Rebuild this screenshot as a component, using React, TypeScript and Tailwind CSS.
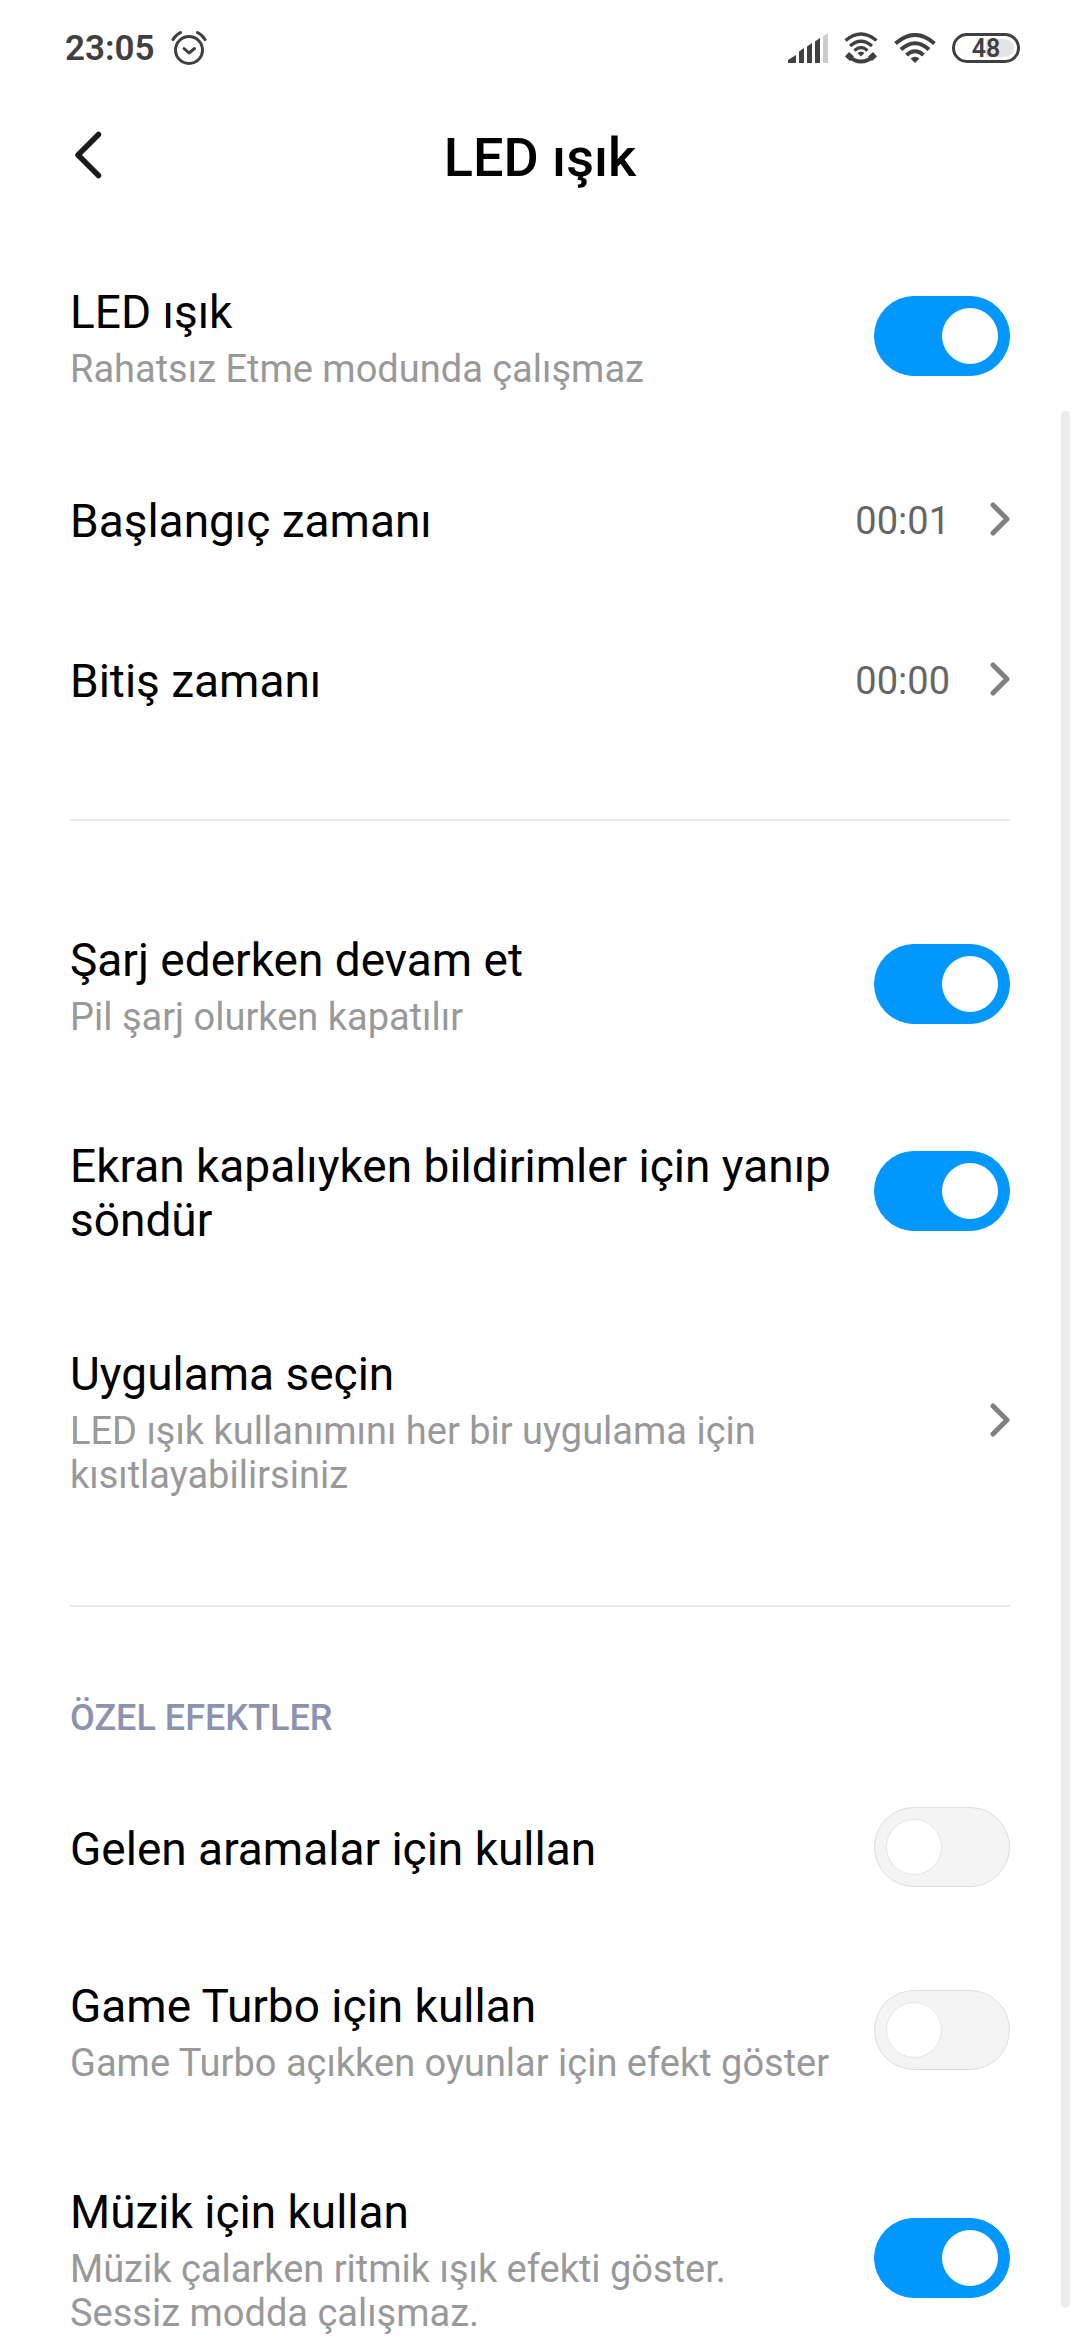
import { useState } from "react";

type RowProps = {
  title: string;
  subtitle?: string;
};

function StatusBar() {
  return (
    <div className="flex h-24 shrink-0 items-center justify-between pl-[65px] pr-[60px] text-[#404040]">
      <div className="flex items-center gap-4">
        <span className="pt-0.5 text-[35px] leading-10 font-semibold">23:05</span>
        <svg className="h-9 w-9" viewBox="0 0 36 36" fill="none" stroke="currentColor" strokeWidth="3" strokeLinecap="round">
          <circle cx="18" cy="20" r="13.5" />
          <path d="M13 18.500l5 4.500 5.500-4.500" strokeLinejoin="round" />
          <path d="M2 9.500Q4.500 5 9.500 2.500M34 9.500Q31.500 5 26.500 2.500" />
        </svg>
      </div>
      <div className="flex items-center gap-4">
        <svg className="h-[30px] w-10" viewBox="0 0 40 30" fill="currentColor">
          <path d="M0 30v-3l8-5V30zM11 30V18.500l5-3.500v15zM19 30V13.500l5-3.500v20zM27 30V8.500L32 5v25z" />
          <path d="M35 30V3.500L40 0v30z" fill="#cccccc" />
        </svg>
        <svg className="h-8 w-[34px]" viewBox="0 0 34 32" fill="none" stroke="currentColor" strokeWidth="3.200">
          <path d="M1.500 8.500Q17-4.500 32.500 8.500M6 14Q17 4.500 28 14M10.500 18.500Q17 12.500 23.500 18.500" />
          <path d="M17 24.500l-3.500-3.500q3.500-2.500 7 0z" fill="currentColor" stroke="none" />
          <path d="M4 24Q17 35 30 24" strokeWidth="4" />
          <path d="M1 24.500l4-4.500 5 4.500-4 4.500zM33 24.500L29 20l-5 4.500 4 4.500z" fill="currentColor" stroke="none" />
        </svg>
        <svg className="h-[30px] w-[42px]" viewBox="0 0 42 30" fill="none" stroke="currentColor" strokeWidth="4">
          <path d="M1.500 10.500Q21-6.500 40.500 10.500M7 16.500Q21 4 35 16.500M12.500 22Q21 14.500 29.500 22" />
          <path d="M21 30l-4.500-4.500q4.500-3.500 9 0z" fill="currentColor" stroke="none" />
        </svg>
        <div className="flex h-[30px] w-[68px] rounded-full border-3 border-[#404040] p-[3px]">
          <span className="flex flex-1 items-center justify-center rounded-full bg-[linear-gradient(to_right,transparent_50%,#e5e5e5_50%)] text-[25px] leading-none font-semibold">
            48
          </span>
        </div>
      </div>
    </div>
  );
}

function Header({ title }: { title: string }) {
  return (
    <header className="grid h-31 shrink-0 grid-cols-[1fr_auto_1fr] items-center px-[70px]">
      <button type="button" aria-label="Geri" className="justify-self-start p-1 pb-2.5">
        <svg className="h-12 w-7" viewBox="0 0 28 48" fill="none" stroke="#1a1a1a" strokeWidth="5.500" strokeLinecap="round" strokeLinejoin="round">
          <path d="M24.500 3.500L4 24l20.500 20.500" />
        </svg>
      </button>
      <h1 className="text-[54px] leading-[64px] font-medium text-black">{title}</h1>
    </header>
  );
}

function RowText({ title, subtitle }: RowProps) {
  return (
    <span className="min-w-0 flex-1 pt-1">
      <span className="block text-[46px] leading-[54px] text-black">{title}</span>
      {subtitle && (
        <span className="mt-2 block whitespace-pre-line text-[38px] leading-[44px] text-[#999999]">{subtitle}</span>
      )}
    </span>
  );
}

function SwitchRow({ title, subtitle, defaultOn = false }: RowProps & { defaultOn?: boolean }) {
  const [on, setOn] = useState(defaultOn);

  return (
    <label className="flex min-h-40 items-center gap-8 py-12">
      <RowText title={title} subtitle={subtitle} />
      <input
        type="checkbox"
        role="switch"
        checked={on}
        onChange={() => setOn(!on)}
        className="-my-4 flex h-20 w-[136px] shrink-0 appearance-none items-center rounded-full border border-[#dedede] bg-[#f4f4f4] px-[11px] before:block before:size-14 before:rounded-full before:border before:border-[#e5e5e5] before:bg-white before:content-[''] checked:justify-end checked:border-[#0097ff] checked:bg-[#0097ff] checked:before:border-white"
      />
    </label>
  );
}

function LinkRow({ title, subtitle, value }: RowProps & { value?: string }) {
  return (
    <button type="button" className="flex min-h-40 w-full items-center py-12 text-left">
      <RowText title={title} subtitle={subtitle} />
      {value && <span className="pt-1 text-[38px] leading-[44px] text-[#666666]">{value}</span>}
      <svg className="ml-10 h-[34px] w-5 shrink-0" viewBox="0 0 20 34" fill="none" stroke="#808080" strokeWidth="5" strokeLinecap="round" strokeLinejoin="round">
        <path d="M3 3l14 14L3 31" />
      </svg>
    </button>
  );
}

function Divider() {
  return <hr className="my-15 h-0.5 border-0 bg-[#e8e8e8]" />;
}

export default function App() {
  return (
    <div className="relative flex h-screen w-full flex-col bg-white font-[Roboto,sans-serif]">
      <StatusBar />
      <Header title="LED ışık" />
      <main className="min-h-0 flex-1 overflow-y-auto px-[70px] pt-[13px] [scrollbar-width:none]">
        <section>
          <SwitchRow title="LED ışık" subtitle="Rahatsız Etme modunda çalışmaz" defaultOn />
          <LinkRow title="Başlangıç zamanı" value="00:01" />
          <LinkRow title="Bitiş zamanı" value="00:00" />
        </section>
        <Divider />
        <section>
          <SwitchRow title="Şarj ederken devam et" subtitle="Pil şarj olurken kapatılır" defaultOn />
          <SwitchRow title="Ekran kapalıyken bildirimler için yanıp söndür" defaultOn />
          <LinkRow title="Uygulama seçin" subtitle="LED ışık kullanımını her bir uygulama için kısıtlayabilirsiniz" />
        </section>
        <Divider />
        <section>
          <h2 className="pt-[30px] pb-7 text-[36px] leading-[42px] font-medium text-[#8c93b0]">ÖZEL EFEKTLER</h2>
          <SwitchRow title="Gelen aramalar için kullan" />
          <SwitchRow title="Game Turbo için kullan" subtitle="Game Turbo açıkken oyunlar için efekt göster" />
          <SwitchRow
            title="Müzik için kullan"
            subtitle={"Müzik çalarken ritmik ışık efekti göster.\nSessiz modda çalışmaz."}
            defaultOn
          />
        </section>
      </main>
      {/* scroll thumb */}
      <div className="absolute top-[411px] right-2.5 bottom-8 w-[9px] rounded-full bg-[#ececec]" />
    </div>
  );
}
